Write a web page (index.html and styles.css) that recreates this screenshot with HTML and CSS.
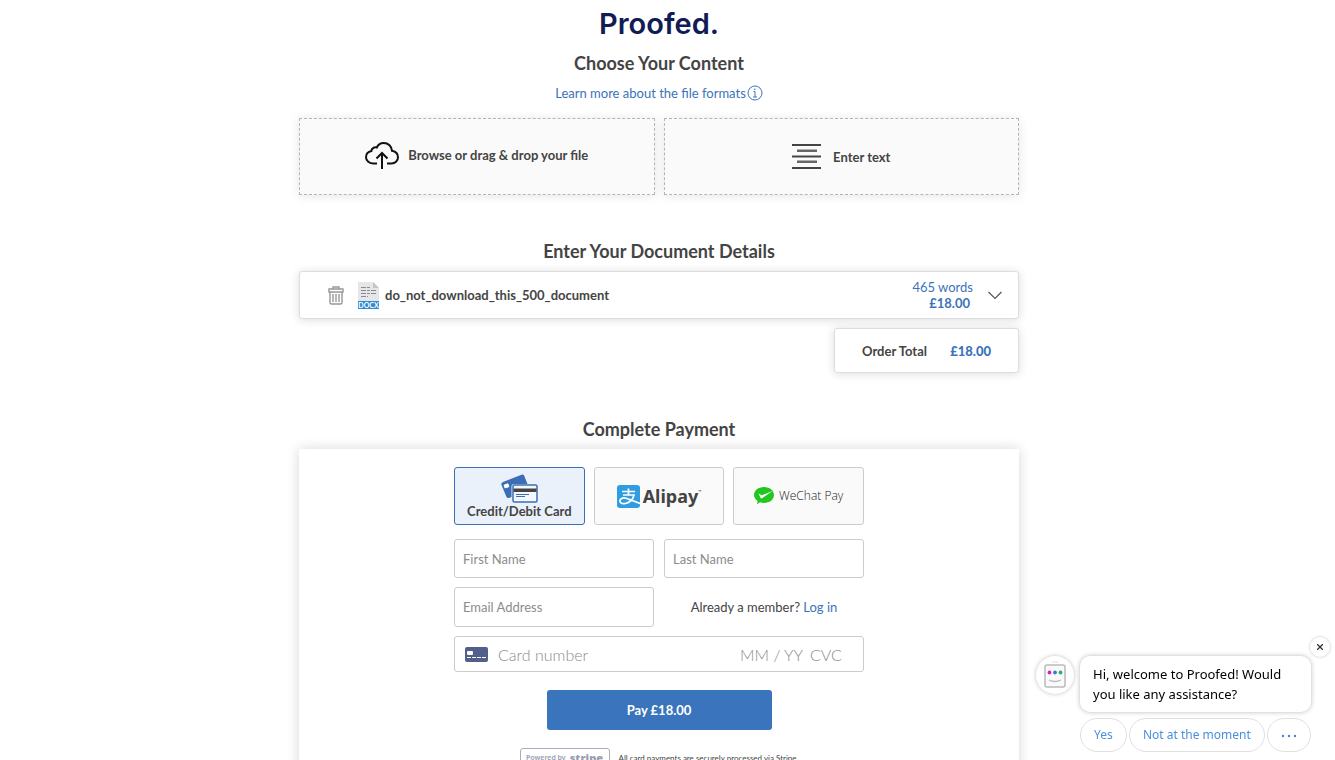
FILE: index.html
```html
<!DOCTYPE html>
<html lang="en">
<head>
  <meta charset="UTF-8">
  <meta name="viewport" content="width=device-width, initial-scale=1.0">
  <title>Proofed - Upload</title>
  <link rel="stylesheet" href="styles.css">
</head>
<body>
  <main class="page">
    <header class="logo">Proofed.</header>

    <section class="upload">
      <h2>Choose Your Content</h2>
      <a class="formats" href="#">Learn more about the file formats
        <svg width="16" height="16" viewBox="0 0 16 16" fill="none" stroke="currentColor">
          <circle cx="8" cy="8" r="7"/>
          <path d="M6.5 6.5H8V12M6 12h4"/>
          <circle cx="7.8" cy="4.2" r=".8" fill="currentColor" stroke="none"/>
        </svg>
      </a>
      <div class="choices">
        <button class="choice" type="button">
          <svg width="34" height="27" viewBox="0 0 34 27" fill="none" stroke="#111" stroke-width="2">
            <path d="M12 21.5H8.500C4.500 21.500 1 19 1 15.200C1 12 3.200 9.600 6.400 9C6.500 6.500 9 4.800 11.800 5.500C13 2.800 15.500 1 18.700 1C23.300 1 26.800 4.300 27 8.800C30.500 9.500 33 12 33 15.300C33 19 30 21.500 26.500 21.500H22"/>
            <path d="M17 27V11M11.500 16.500L17 11l5.500 5.500"/>
          </svg>
          Browse or drag &amp; drop your file
        </button>
        <button class="choice choice-text" type="button">
          <svg width="29" height="25" viewBox="0 0 29 25" fill="#444">
            <path d="M0 0h29v2H0zM0 11.500h29v2H0zM0 23h29v2H0z"/>
            <path fill="#666" d="M5 5.500h20v2.500H5zM5 16.500h20V19H5z"/>
          </svg>
          Enter text
        </button>
      </div>
    </section>

    <section class="details">
      <h2>Enter Your Document Details</h2>
      <div class="document">
        <button class="icon-btn" type="button" aria-label="Remove document">
          <svg width="16" height="19" viewBox="0 0 16 19" fill="none" stroke="#96989b" stroke-width="1.400">
            <path d="M5 3V1h6v2M1 3h14v3H1zM2 6v10.500q0 1.500 1.500 1.500h9q1.500 0 1.500-1.500V6"/>
            <path d="M5 8v8M8 8v8M11 8v8"/>
          </svg>
        </button>
        <svg class="file-icon" width="21" height="27" viewBox="0 0 21 27">
          <path fill="#e6e6e6" d="M0 0h15l6 6v14H0z"/>
          <path fill="#c4c4c4" d="M15 0l6 6h-6z"/>
          <path stroke="#85899a" stroke-dasharray="5 1 3 1" d="M3 5.500h10M3 8.500h15M3 11.500h15M3 14.500h7"/>
          <path fill="#3089d3" d="M0 19h21v8H0z"/>
          <text class="file-type" x="10.500" y="25.500" text-anchor="middle">DOCX</text>
        </svg>
        <span class="file-name">do_not_download_this_500_document</span>
        <div class="file-cost">
          <span>465 words</span>
          <strong>£18.00</strong>
        </div>
        <button class="icon-btn" type="button" aria-label="Show details">
          <svg width="14" height="9" viewBox="0 0 14 9" fill="none" stroke="#555" stroke-width="1.200"><path d="M.5 1L7 7.500L13.500 1"/></svg>
        </button>
      </div>
      <div class="total">
        <span>Order Total</span>
        <strong>£18.00</strong>
      </div>
    </section>

    <section class="payment">
      <h2>Complete Payment</h2>
      <div class="panel">
        <form class="pay-form">
          <div class="methods">
            <button class="method active" type="button">
              <svg width="37" height="29" viewBox="0 0 37 29">
                <path fill="#3b6fb5" d="M2 8L20.500 .8q2-.8 2.800 1.200L26.500 10H13q-2.500 0-2.500 2.500V23q-4 2-5 0L.5 11q-.8-2 1.500-3z"/>
                <rect x="3" y="10" width="5" height="4" rx="1" fill="#fff" transform="rotate(-21 5 12)"/>
                <rect x="12" y="11" width="24" height="17" rx="1.500" fill="#f4f8fe" stroke="#3b6fb5" stroke-width="1.500"/>
                <path fill="#444" d="M12.500 14.500h23V18h-23z"/>
                <path stroke="#3b6fb5" d="M15 20.500h13M15 22.500h9"/>
              </svg>
              Credit/Debit Card
            </button>
            <button class="method alipay" type="button">
              <svg width="23" height="23" viewBox="0 0 23 23">
                <rect width="23" height="23" rx="3" fill="#2f9ddf"/>
                <g fill="none" stroke="#fff" stroke-width="1.700">
                  <path d="M5 6.500h13M11.500 3.500V10M6 10h11C16 14 13 17.500 8.500 18.500C4.500 19.300 2.500 17.500 3 15.300C3.600 12.800 7 12.400 10.500 13.700L23 18.500"/>
                </g>
              </svg>
              <span>Alipay<sup>™</sup></span>
            </button>
            <button class="method wechat" type="button">
              <svg width="20" height="18" viewBox="0 0 20 18">
                <path fill="#1fc71f" d="M10 0c5.600 0 10 3.600 10 8s-4.400 8-10 8c-1.500 0-2.800-.2-4-.7L3 17.300l.6-3.400C1.400 12.500 0 10.400 0 8c0-4.400 4.400-8 10-8z"/>
                <path fill="#fff" d="M4.500 6.500l3.200 1.800L18.500 4L8 11.200q-1 .5-1.500-.4z"/>
              </svg>
              WeChat Pay
            </button>
          </div>
          <div class="fields">
            <input class="field" type="text" placeholder="First Name" aria-label="First Name">
            <input class="field" type="text" placeholder="Last Name" aria-label="Last Name">
            <input class="field" type="email" placeholder="Email Address" aria-label="Email Address">
            <p class="member">Already a member? <a href="#">Log in</a></p>
          </div>
          <div class="card-row">
            <svg width="23" height="15" viewBox="0 0 23 15">
              <rect width="23" height="15" rx="2" fill="#525f8a"/>
              <rect x="2" y="4" width="6" height="4" rx="1" fill="#fff"/>
              <path stroke="#fff" stroke-dasharray="4 1" d="M2 10.500h19"/>
            </svg>
            <input class="card-number" type="text" placeholder="Card number" aria-label="Card number">
            <input class="card-expiry" type="text" placeholder="MM / YY" aria-label="Expiry date">
            <input class="card-cvc" type="text" placeholder="CVC" aria-label="CVC">
          </div>
          <button class="pay-btn" type="submit">Pay £18.00</button>
          <div class="secure">
            <span class="stripe">Powered by <b>stripe</b></span>
            <span>All card payments are securely processed via Stripe.</span>
          </div>
        </form>
      </div>
    </section>
  </main>

  <aside class="chat">
    <button class="chat-close" type="button" aria-label="Close">
      <svg width="6" height="6" viewBox="0 0 6 6" stroke="#333" stroke-width="1.300"><path d="M0 0l6 6M6 0L0 6"/></svg>
    </button>
    <div class="avatar">
      <svg width="22" height="27" viewBox="0 0 22 27" fill="none">
        <path stroke="#ddd" d="M8 1h6"/>
        <rect x="1" y="4" width="20" height="22" rx="2" fill="#fafafa" stroke="#bbb" stroke-width="1.500"/>
        <circle cx="5.500" cy="11.500" r="1.900" fill="#d81fc5"/>
        <circle cx="11" cy="11.500" r="1.900" fill="#3b7dc4"/>
        <circle cx="16.500" cy="11.500" r="1.900" fill="#25b45a"/>
        <path stroke="#bbb" stroke-width="1.300" d="M5 19q6 3 12 0"/>
      </svg>
    </div>
    <div class="chat-body">
      <p class="bubble">Hi, welcome to Proofed! Would you like any assistance?</p>
      <div class="replies">
        <button type="button">Yes</button>
        <button type="button">Not at the moment</button>
        <button type="button" aria-label="More">
          <svg width="16" height="4" viewBox="0 0 16 4" fill="#4a86d0"><circle cx="2" cy="2" r="1.200"/><circle cx="8" cy="2" r="1.200"/><circle cx="14" cy="2" r="1.200"/></svg>
        </button>
      </div>
    </div>
  </aside>
</body>
</html>
```
FILE: styles.css
```css
* {
  box-sizing: border-box;
}
body {
  margin: 0;
  padding-right: 17px;
  font-family: Lato, sans-serif;
  font-size: 13px;
  line-height: 16px;
  color: #444;
  background: #fff;
}
button, input {
  font: inherit;
  color: inherit;
}
button {
  cursor: pointer;
}
svg {
  flex: none;
}
a {
  color: #3a73b9;
  text-decoration: none;
}
h2 {
  margin: 0;
  font-size: 18px;
  line-height: 22px;
  text-align: center;
}
.page {
  max-width: 720px;
  margin: 0 auto;
}
.logo {
  padding-top: 6px;
  font-family: Inter, sans-serif;
  font-size: 29px;
  font-weight: 600;
  line-height: 36px;
  text-align: center;
  color: #111b54;
}
.upload h2 {
  padding-top: 10px;
}
.formats {
  display: flex;
  justify-content: center;
  align-items: center;
  gap: 1px;
  margin: 11px 0 17px;
}
.choices {
  display: grid;
  grid-template-columns: 1fr 1fr;
  gap: 9px;
}
.choice {
  display: flex;
  align-items: center;
  justify-content: center;
  gap: 9px;
  height: 77px;
  padding-bottom: 4px;
  border: 1px dashed #b5b5b5;
  background: #fafafa;
  box-shadow: 0 1px 10px rgba(0, 0, 0, 0.1);
  font-weight: bold;
}
.choice-text {
  gap: 12px;
  padding-bottom: 1px;
}
.details {
  padding-top: 45px;
}
.document {
  display: flex;
  align-items: center;
  height: 48px;
  margin-top: 9px;
  padding: 0 16px 0 28px;
  border: 1px solid #ddd;
  border-radius: 3px;
  background: #fff;
  box-shadow: 0 1px 10px rgba(0, 0, 0, 0.14);
}
.icon-btn {
  display: flex;
  padding: 0;
  border: 0;
  background: none;
}
.file-icon {
  margin: 0 6px 0 14px;
}
.file-type {
  font-family: Lato, sans-serif;
  font-size: 7px;
  font-weight: bold;
  fill: #fff;
}
.file-name {
  flex: 1;
  font-weight: bold;
}
.file-cost {
  display: flex;
  flex-direction: column;
  align-items: flex-end;
  margin-right: 15px;
  color: #3a73b9;
}
.file-cost strong {
  padding-right: 3px;
}
.total {
  display: flex;
  align-items: center;
  justify-content: space-between;
  width: 185px;
  height: 45px;
  margin: 9px 0 0 auto;
  padding: 0 27px;
  border: 1px solid #ddd;
  border-radius: 3px;
  background: #fff;
  box-shadow: 0 1px 10px rgba(0, 0, 0, 0.14);
  font-weight: bold;
}
.total strong {
  color: #3a73b9;
}
.payment {
  padding-top: 45px;
}
.panel {
  margin-top: 9px;
  padding: 18px 20px;
  background: #fff;
  box-shadow: 0 0 12px rgba(0, 0, 0, 0.16);
}
.pay-form {
  display: flex;
  flex-direction: column;
  max-width: 410px;
  margin: 0 auto;
}
.methods {
  display: grid;
  grid-template-columns: repeat(3, 1fr);
  gap: 9px;
}
.method {
  display: flex;
  align-items: center;
  justify-content: center;
  height: 58px;
  padding: 0;
  border: 1px solid #ccc;
  border-radius: 3px;
  background: #fafafa;
}
.method.active {
  flex-direction: column;
  border-color: #3a6fb5;
  background: #eaf1fa;
  font-weight: bold;
}
.alipay {
  gap: 3px;
  font-family: "Noto Sans", sans-serif;
  font-size: 18px;
  font-weight: bold;
}
.alipay sup {
  font-size: 4px;
  font-weight: normal;
  line-height: 0;
  vertical-align: 10px;
}
.wechat {
  gap: 5px;
  font-family: "Open Sans", sans-serif;
  font-size: 12px;
  font-weight: 300;
  color: #222;
}
.fields {
  display: grid;
  grid-template-columns: 1fr 1fr;
  gap: 9px 10px;
  margin: 14px 0 9px;
}
.field {
  width: 100%;
  height: 39px;
  padding: 0 8px;
  border: 1px solid #ccc;
  border-radius: 3px;
  background: #fff;
}
.field[type="email"] {
  height: 40px;
}
.field::placeholder,
.card-row input::placeholder {
  color: #8c8c8c;
  opacity: 1;
}
.member {
  align-self: center;
  margin: 0;
  text-align: center;
}
.card-row {
  display: flex;
  align-items: center;
  height: 36px;
  padding: 0 10px;
  border: 1px solid #ccc;
  border-radius: 3px;
}
.card-row input {
  min-width: 0;
  padding: 0;
  border: 0;
  background: none;
  font-size: 16px;
  font-weight: 300;
}
.card-row .card-number {
  flex: 1;
  margin-left: 10px;
}
.card-row .card-expiry {
  width: 70px;
}
.card-row .card-cvc {
  width: 43px;
}
.pay-btn {
  align-self: center;
  width: 225px;
  height: 40px;
  margin: 18px 0;
  border: 0;
  border-radius: 3px;
  background: #3a74bd;
  color: #fff;
  font-weight: bold;
}
.secure {
  display: flex;
  align-items: center;
  justify-content: center;
  gap: 9px;
  font-size: 8px;
}
.stripe {
  display: flex;
  align-items: center;
  justify-content: center;
  gap: 4px;
  width: 90px;
  height: 20px;
  border: 1px solid #a9abbe;
  border-radius: 3px;
  font-family: "Noto Sans", sans-serif;
  font-size: 7px;
  font-weight: 600;
  color: #9a9cb3;
}
.stripe b {
  font-size: 11px;
}

/* chat widget */
.chat {
  position: fixed;
  right: 24px;
  bottom: 8px;
  display: flex;
  gap: 6px;
  font-family: "Noto Sans", sans-serif;
  line-height: 20px;
}
.avatar {
  display: flex;
  align-items: center;
  justify-content: center;
  width: 38px;
  height: 38px;
  border-radius: 50%;
  background: #fff;
  box-shadow: 0 0 4px rgba(0, 0, 0, 0.25);
}
.avatar svg {
  margin-bottom: 2px;
}
.chat-body {
  width: 231px;
}
.bubble {
  margin: 0 0 6px;
  padding: 8px 13px;
  border-radius: 10px;
  background: #fff;
  box-shadow: 0 0 5px rgba(0, 0, 0, 0.28);
  color: #000;
}
.replies {
  display: flex;
  gap: 2px;
}
.replies button {
  flex: auto;
  height: 34px;
  padding: 0 12px;
  border: 1px solid #e0e0e0;
  border-radius: 17px;
  background: #fff;
  color: #4a90dc;
  font-size: 12px;
  white-space: nowrap;
}
.replies svg {
  vertical-align: middle;
}
.chat-close {
  position: absolute;
  top: -19px;
  right: -19px;
  display: flex;
  align-items: center;
  justify-content: center;
  width: 20px;
  height: 20px;
  padding: 0;
  border: 0;
  border-radius: 50%;
  background: #fff;
  box-shadow: 0 0 3px rgba(0, 0, 0, 0.25);
}
```
